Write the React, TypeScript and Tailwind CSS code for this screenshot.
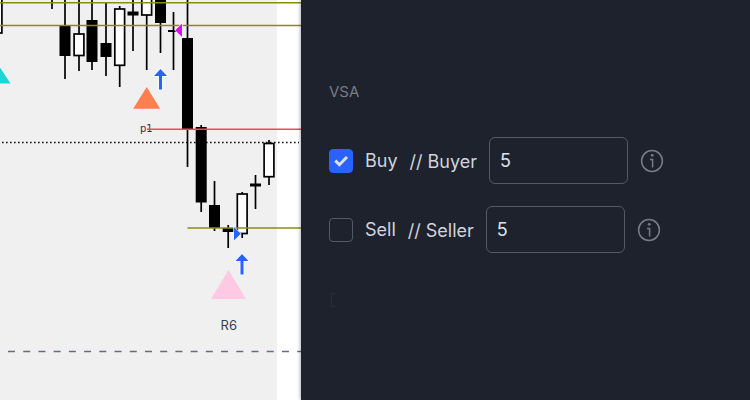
type Candle = {
  x: number;
  high: number;
  low: number;
  top: number;
  bottom: number;
  hollow?: boolean;
};

const candles: Candle[] = [
  { x: -3, high: -10, low: 33, top: -10, bottom: 33, hollow: true },
  { x: 65, high: -10, low: 79, top: 26, bottom: 56 },
  { x: 79, high: -10, low: 71, top: 34, bottom: 55.5, hollow: true },
  { x: 92, high: -10, low: 70, top: 20, bottom: 62 },
  { x: 106, high: 3, low: 76, top: 43, bottom: 57 },
  { x: 119.7, high: 6, low: 87, top: 9, bottom: 65.3, hollow: true },
  { x: 133, high: -10, low: 51, top: 11.5, bottom: 15.5 },
  { x: 146.7, high: -10, low: 70, top: -10, bottom: 15, hollow: true },
  { x: 160.5, high: -10, low: 53, top: -10, bottom: 23 },
  { x: 173.5, high: 12, low: 70, top: 30, bottom: 32 },
  { x: 187.5, high: -10, low: 167, top: 38, bottom: 129 },
  { x: 201.2, high: 125, low: 212, top: 127, bottom: 202.5 },
  { x: 214.5, high: 181, low: 231, top: 205, bottom: 228 },
  { x: 228.2, high: 225, low: 248, top: 228, bottom: 232 },
  { x: 242.2, high: 192, low: 238, top: 194, bottom: 233.5, hollow: true },
  { x: 255.5, high: 175, low: 209, top: 183.5, bottom: 186.5 },
  { x: 269, high: 140, low: 185, top: 143.5, bottom: 176.7, hollow: true },
];

const Arrow = ({ x, y }: { x: number; y: number }) => (
  <path
    d={`M${x} ${y} l6.5 7 h-5 v13.5 h-3 v-13.5 h-5 z`}
    fill="#2962ff"
    stroke="#f8faff"
    strokeWidth="2"
    paintOrder="stroke"
  />
);

const Chart = () => {
  return (
    <svg
      className="block h-full w-full"
      viewBox="0 0 301 400"
      preserveAspectRatio="xMaxYMin slice"
      role="img"
      aria-label="Candlestick chart"
    >
      <rect width="301" height="400" fill="#fff" />
      <rect x="-400" width="677" height="400" fill="#f0f0f0" />

      {/* price line and lower level */}
      <line x1="2" x2="299" y1="142.5" y2="142.5" stroke="#111" strokeWidth="1.4" strokeDasharray="1.6 2.4" />
      <line x1="8" x2="301" y1="351.5" y2="351.5" stroke="#5f6f80" strokeWidth="1.4" strokeDasharray="7 8.22" />

      <line x1="52" x2="52" y1="0" y2="9" stroke="#000" strokeWidth="1.7" />
      {candles.map((c) => (
        <g key={c.x} stroke="#000" strokeWidth="1.7">
          <line x1={c.x} x2={c.x} y1={c.high} y2={c.low} />
          {c.hollow ? (
            <rect x={c.x - 4.9} y={c.top} width="9.8" height={c.bottom - c.top} fill="#fff" />
          ) : (
            <rect x={c.x - 5.5} y={c.top} width="11" height={c.bottom - c.top} stroke="none" />
          )}
        </g>
      ))}

      {/* levels */}
      <g stroke="#8b8b12" strokeWidth="1.6">
        <line x1="0" x2="301" y1="2.8" y2="2.8" />
        <line x1="0" x2="301" y1="25.5" y2="25.5" />
        <line x1="187.5" x2="301" y1="228" y2="228" />
      </g>
      <text x="140" y="132" fontSize="10" fill="#333" fontFamily="DejaVu Sans, sans-serif">
        p1
      </text>
      <line x1="147" x2="301" y1="129.2" y2="129.2" stroke="#f04a4a" strokeWidth="1.5" />

      {/* signals */}
      <path d="M-1 66 L10.5 83.5 H-12 Z" fill="#1ed4d6" />
      <path d="M146.7 87 L160.2 108.8 H133.2 Z" fill="#ff7f50" />
      <path d="M228.5 270 L246 299 H211 Z" fill="#ffc8e3" />
      <path d="M175.2 30.3 L182 23.5 V37 Z" fill="#d90df5" stroke="#fff" strokeWidth="1.2" paintOrder="stroke" />
      <path d="M240.8 233.8 L234 227 V240.5 Z" fill="#2962ff" stroke="#fff" strokeWidth="1.2" paintOrder="stroke" />
      <Arrow x={160.5} y={69} />
      <Arrow x={242} y={254} />
      <text x="228.8" y="329.5" fontSize="13" fill="#3a3f4a" textAnchor="middle" fontFamily="Inter, sans-serif">
        R6
      </text>
    </svg>
  );
};

const CheckIcon = () => (
  <svg
    viewBox="0 0 24 24"
    className="pointer-events-none invisible col-start-1 row-start-1 size-6 peer-checked:visible"
    fill="none"
    stroke="#dfe0e6"
    strokeWidth="3"
  >
    <path d="M6.3 11.6 L10.4 15.7 L18 8" />
  </svg>
);

const InfoIcon = () => (
  <svg viewBox="0 0 24 24" className="size-6" fill="none" stroke="#787b86" strokeWidth="1.5">
    <circle cx="12" cy="12" r="10.4" />
    <path d="M10 10.5 H12.6 V18.5" />
    <circle cx="12.2" cy="6.3" r="1.4" fill="#787b86" stroke="none" />
  </svg>
);

const SettingRow = ({
  id,
  label,
  side,
  checked,
}: {
  id: string;
  label: string;
  side: string;
  checked?: boolean;
}) => {
  return (
    <div className="flex items-center gap-3 text-lg text-[#d1d4dc]">
      <div className="grid shrink-0">
        <input
          id={id}
          type="checkbox"
          defaultChecked={checked}
          className="peer col-start-1 row-start-1 size-6 appearance-none rounded border border-[#565963] checked:border-[#2962ff] checked:bg-[#2962ff]"
        />
        <CheckIcon />
      </div>
      <label htmlFor={id}>{label}</label>
      <label htmlFor={`${id}-value`} className="pt-0.5 whitespace-nowrap">
        // {side}
      </label>
      <input
        id={`${id}-value`}
        type="text"
        defaultValue="5"
        className="h-[47px] w-[139px] min-w-0 rounded-md border border-[#565963] bg-transparent px-2.5 text-[#dfe2ea] outline-none"
      />
      <button type="button" aria-label={`About ${side}`} className="shrink-0">
        <InfoIcon />
      </button>
    </div>
  );
};

const App = () => {
  return (
    <div className="flex h-screen bg-[#1e222d] font-[Inter,sans-serif]">
      <div className="w-2/5 min-w-[301px] shrink-0 overflow-hidden">
        <Chart />
      </div>
      <main className="min-w-0 flex-1 px-7 pt-[82px] shadow-[0_0_4px_rgba(0,0,0,0.45)]">
        <h2 className="mb-[35px] text-[15px] leading-5 text-[#787b86]">VSA</h2>
        <div className="flex flex-col gap-[22px]">
          <SettingRow id="buy" label="Buy" side="Buyer" checked />
          <SettingRow id="sell" label="Sell" side="Seller" />
        </div>
        {/* faded edge of the next field */}
        <div className="mt-10 ml-0.5 h-3.5 w-1 border-y border-l border-[#2a2e39]" />
      </main>
    </div>
  );
};

export default App;
